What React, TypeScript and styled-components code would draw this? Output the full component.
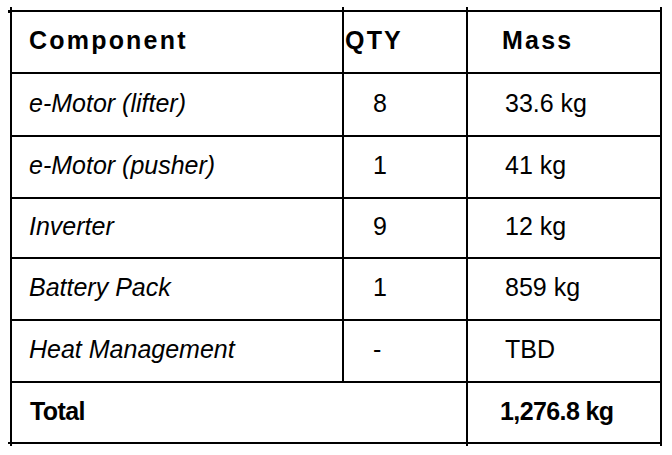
import React from "react";
import styled, { createGlobalStyle, css } from "styled-components";

const Global = createGlobalStyle`
  html, body { margin: 0; padding: 0; background: #fff; }
  body { font-family: "Liberation Sans", Arial, sans-serif; color: #000; }
`;

const Page = styled.div`
  padding: 10px;
`;

const Table = styled.table`
  border-collapse: separate;
  border-spacing: 0;
  table-layout: fixed;
  width: 652px;
  border-top: 2px solid #000;
  border-left: 2px solid #000;
  font-family: "Liberation Sans", Arial, sans-serif;
  font-size: 25px;
  line-height: 28px;
`;

const tick = css`
  content: "";
  position: absolute;
  width: 2px;
  background: #000;
`;

type CellProps = {
  $indent: number;
  $h: number;
  $variant?: "head" | "item" | "value" | "total";
  $tickTop?: boolean;
  $tickTopLeft?: boolean;
  $tickBottom?: boolean;
  $tickBottomLeft?: boolean;
};

const Cell = styled.td<CellProps>`
  position: relative;
  box-sizing: border-box;
  height: ${(p) => p.$h}px;
  padding: 0 0 4px ${(p) => p.$indent}px;
  border-right: 2px solid #000;
  border-bottom: 2px solid #000;
  vertical-align: middle;
  text-align: left;
  white-space: nowrap;
  color: #000;
  font-weight: ${(p) => (p.$variant === "head" || p.$variant === "total" ? 700 : 400)};
  font-style: ${(p) => (p.$variant === "item" ? "italic" : "normal")};
  letter-spacing: ${(p) =>
    p.$variant === "head" ? "2.2px" : p.$variant === "total" ? "-0.6px" : "0"};

  ${(p) =>
    p.$tickTop &&
    css`
      &::before {
        ${tick};
        right: -2px;
        top: -5px;
        height: 3px;
      }
    `}
  ${(p) =>
    p.$tickTopLeft &&
    css`
      &::after {
        ${tick};
        left: -2px;
        top: -5px;
        height: 3px;
        box-shadow: -2px 3px 0 #000;
      }
    `}
  ${(p) =>
    p.$tickBottom &&
    css`
      &::after {
        ${tick};
        right: -2px;
        bottom: -4px;
        height: 2px;
      }
    `}
  ${(p) =>
    p.$tickBottomLeft &&
    css`
      &::before {
        ${tick};
        left: -2px;
        bottom: -4px;
        height: 2px;
        box-shadow: -2px -2px 0 #000;
      }
    `}
`;

const COL_W = [332, 124, 194];

const rows = [
  { name: "e-Motor (lifter)", qty: "8", mass: "33.6 kg", h: 63 },
  { name: "e-Motor (pusher)", qty: "1", mass: "41 kg", h: 62 },
  { name: "Inverter", qty: "9", mass: "12 kg", h: 60 },
  { name: "Battery Pack", qty: "1", mass: "859 kg", h: 62 },
  { name: "Heat Management", qty: "-", mass: "TBD", h: 62 },
];

export default function App() {
  return (
    <>
      <Global />
      <Page>
        <Table>
          <colgroup>
            {COL_W.map((w, i) => (
              <col key={i} style={{ width: w }} />
            ))}
          </colgroup>
          <thead>
            <tr>
              <Cell as="th" $h={62} $indent={17} $variant="head" $tickTop $tickTopLeft>
                Component
              </Cell>
              <Cell as="th" $h={62} $indent={1} $variant="head" $tickTop>
                QTY
              </Cell>
              <Cell as="th" $h={62} $indent={34} $variant="head" $tickTop>
                Mass
              </Cell>
            </tr>
          </thead>
          <tbody>
            {rows.map((r) => (
              <tr key={r.name}>
                <Cell $h={r.h} $indent={17} $variant="item">
                  {r.name}
                </Cell>
                <Cell $h={r.h} $indent={29} $variant="value">
                  {r.qty}
                </Cell>
                <Cell $h={r.h} $indent={37} $variant="value">
                  {r.mass}
                </Cell>
              </tr>
            ))}
            <tr>
              <Cell colSpan={2} $h={61} $indent={18} $variant="total" $tickBottomLeft $tickBottom>
                Total
              </Cell>
              <Cell $h={61} $indent={32} $variant="total" $tickBottom>
                1,276.8 kg
              </Cell>
            </tr>
          </tbody>
        </Table>
      </Page>
    </>
  );
}
